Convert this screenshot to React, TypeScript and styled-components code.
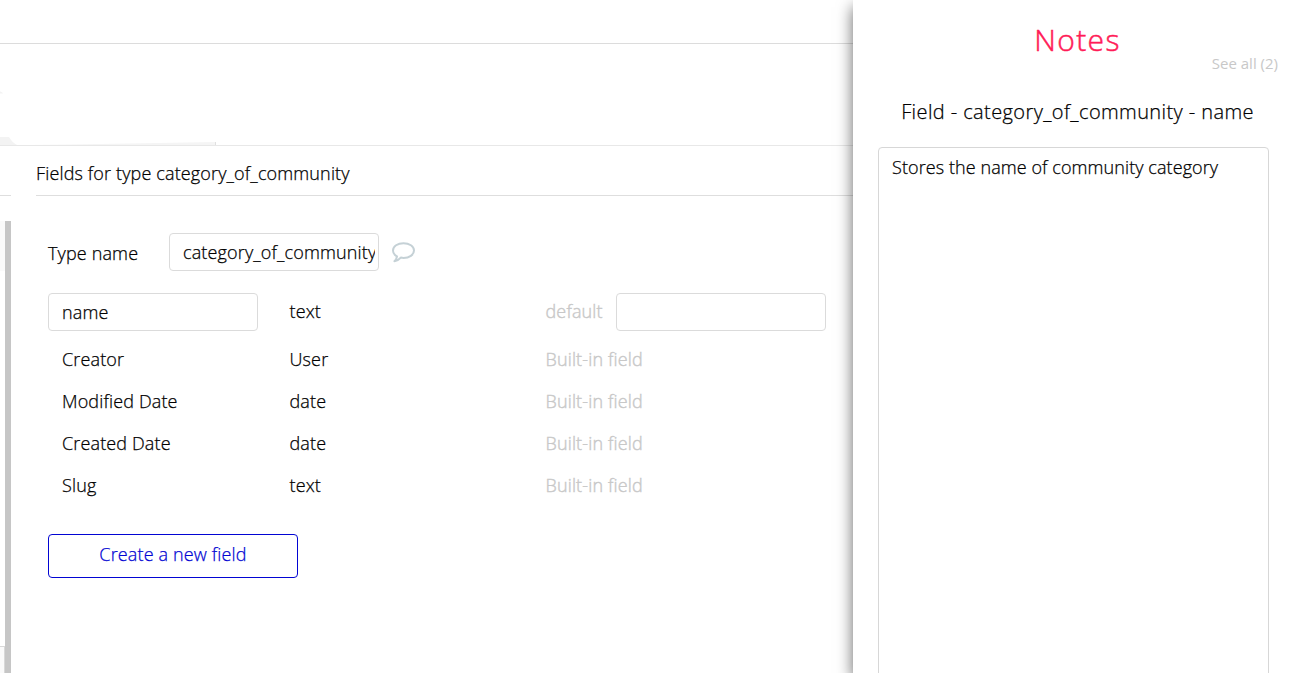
import styled, { createGlobalStyle } from "styled-components";

const GlobalStyle = createGlobalStyle`
  * {
    box-sizing: border-box;
  }

  body {
    margin: 0;
    overflow: hidden;
    background: #fff;
    color: #000;
    font-family: "Open Sans", "Noto Sans", sans-serif;
    font-size: 18px;
    font-weight: 300;
    letter-spacing: 0.14px;
    -webkit-text-stroke: 0.25px currentColor;
  }
`;

const Page = styled.div`
  display: flex;
  width: 1302px;
  height: 673px;
  overflow: hidden;
`;

const Editor = styled.main`
  display: flex;
  flex-direction: column;
  width: 853px;
`;

const TopBar = styled.div`
  height: 44px;
  border-bottom: 1px solid #dcdcdc;
`;

const TabBar = styled.div`
  display: flex;
  align-items: flex-end;
  height: 102px;
  border-bottom: 1px solid #e8e8e8;

  svg {
    display: block;
  }
`;

const Body = styled.div`
  display: flex;
  flex: 1;
  min-height: 0;
`;

const Sidebar = styled.div`
  display: flex;
  flex-direction: column;
  width: 11px;
`;

const SidebarHeader = styled.div`
  height: 50px;
  border-bottom: 1px solid #dedede;
`;

const SidebarList = styled.div`
  display: flex;
  flex: 1;
  flex-direction: column;
  justify-content: space-between;
  margin-top: 25px;
  border-right: 6px solid #c6c6c6;
`;

const SelectedType = styled.div`
  height: 50px;
  background: #fafafa;
`;

const TypeInput = styled.div`
  width: 5px;
  height: 27px;
  border-top: 1px solid #d8d8d8;
  border-right: 1px solid #d8d8d8;
  background: #fafafa;
`;

const Content = styled.section`
  flex: 1;
  margin-left: 25px;
`;

const ContentTitle = styled.div`
  height: 50px;
  padding-top: 2px;
  border-bottom: 1px solid #dedede;
  line-height: 50px;
`;

const Fields = styled.div`
  padding: 37px 0 0 12px;
`;

const TypeRow = styled.div`
  display: flex;
  align-items: center;
  height: 38px;
  margin-bottom: 22px;

  svg {
    margin-left: 12px;
  }
`;

const TypeLabel = styled.label`
  width: 121px;
  padding-top: 2px;
`;

const Input = styled.input`
  width: 210px;
  height: 38px;
  padding: 0 3px 0 13px;
  border: 1px solid #dbdbdb;
  border-radius: 4px;
  outline: none;
  background: #fff;
  color: #000;
  font: inherit;
  letter-spacing: inherit;
`;

const FieldRow = styled.div<{ $editable?: boolean }>`
  display: grid;
  grid-template-columns: 241.5px 256px 70.5px 210px;
  align-items: center;
  height: ${({ $editable }) => ($editable ? "38px" : "42px")};
  margin-bottom: ${({ $editable }) => ($editable ? "8px" : "0")};

  span {
    padding-bottom: 2px;
  }
`;

const FieldName = styled.span`
  padding-left: 14px;
`;

const Muted = styled.span`
  color: #c8c8c8;
  white-space: nowrap;
  -webkit-text-stroke: 0.4px #c8c8c8;
`;

const CreateButton = styled.button`
  width: 250px;
  height: 44px;
  margin-top: 27px;
  padding: 0 0 4px;
  border: 1px solid #0205d3;
  border-radius: 4px;
  background: #fff;
  color: #0205d3;
  font: inherit;
  letter-spacing: inherit;
  -webkit-text-stroke: 0.25px #0205d3;
`;

const NotesPanel = styled.aside`
  position: relative;
  display: flex;
  flex: 1;
  flex-direction: column;
  background: #fff;
  box-shadow: 0 7px 15px rgba(0, 0, 0, 0.6);
`;

const NotesTitle = styled.h1`
  margin: 18px 0 0;
  color: #ff1b57;
  font-size: 30px;
  font-weight: 300;
  line-height: 44px;
  letter-spacing: 1.4px;
  text-align: center;
  -webkit-text-stroke: 0.5px #ff1b57;
`;

const SeeAll = styled.a`
  margin: -9px 24px 0 0;
  color: #c8c8c8;
  font-size: 15px;
  font-weight: 400;
  line-height: 20px;
  letter-spacing: 0;
  text-align: right;
  -webkit-text-stroke: 0;
`;

const NoteSubject = styled.div`
  margin: 24px 0 20px;
  font-size: 20px;
  line-height: 30px;
  letter-spacing: 0.4px;
  text-align: center;
`;

const NoteText = styled.textarea`
  flex: 1;
  margin: 0 33px -10px 25px;
  padding: 7px 13px;
  border: 1px solid #d7d7d7;
  border-radius: 4px;
  outline: none;
  resize: none;
  background: #fff;
  color: #000;
  font: inherit;
  letter-spacing: 0.08px;
`;

const builtInFields = [
  { name: "Creator", type: "User" },
  { name: "Modified Date", type: "date" },
  { name: "Created Date", type: "date" },
  { name: "Slug", type: "text" },
];

const TabEdge = () => (
  <svg width="216" height="54" viewBox="0 0 216 54">
    <path d="M0 0.5C1.5 0.5 2.5 1.5 3 2.5H0Z" fill="#f3f3f3" />
    <path d="M0 46H9C11 49 13 52 17 54H0Z" fill="#f3f3f3" />
    <path d="M28 54L70 53.5L215 51V54Z" fill="#f5f5f5" />
    <path d="M215.5 51V54" stroke="#e0e0e0" />
  </svg>
);

const CommentIcon = () => (
  <svg width="25" height="22" viewBox="0 0 25 22" fill="none">
    <path
      d="M12.5 2.2C6.6 2.2 2 5.3 2 9.6C2 12 3.5 14.2 6 15.5C5.7 17.3 4.8 19 3.4 20.2C6 19.8 8.2 18.5 9.8 16.6C10.7 16.8 11.5 16.9 12.5 16.9C18.3 16.9 23 13.8 23 9.6C23 5.3 18.3 2.2 12.5 2.2Z"
      stroke="#c5d1d6"
      strokeWidth="2"
      strokeLinejoin="round"
    />
  </svg>
);

const NotesSidebar = () => (
  <NotesPanel>
    <NotesTitle>Notes</NotesTitle>
    <SeeAll>See all (2)</SeeAll>
    <NoteSubject>Field - category_of_community - name</NoteSubject>
    <NoteText defaultValue="Stores the name of community category" />
  </NotesPanel>
);

const App = () => {
  return (
    <>
      <GlobalStyle />
      <Page>
        <Editor>
          <TopBar />
          <TabBar>
            <TabEdge />
          </TabBar>
          <Body>
            <Sidebar>
              <SidebarHeader />
              <SidebarList>
                <SelectedType />
                <TypeInput />
              </SidebarList>
            </Sidebar>
            <Content>
              <ContentTitle>Fields for type category_of_community</ContentTitle>
              <Fields>
                <TypeRow>
                  <TypeLabel htmlFor="type-name">Type name</TypeLabel>
                  <Input id="type-name" defaultValue="category_of_community" />
                  <CommentIcon />
                </TypeRow>

                <FieldRow $editable>
                  <Input defaultValue="name" />
                  <span>text</span>
                  <Muted>default</Muted>
                  <Input />
                </FieldRow>
                {builtInFields.map(({ name, type }) => (
                  <FieldRow key={name}>
                    <FieldName>{name}</FieldName>
                    <span>{type}</span>
                    <Muted>Built-in field</Muted>
                  </FieldRow>
                ))}

                <CreateButton>Create a new field</CreateButton>
              </Fields>
            </Content>
          </Body>
        </Editor>
        <NotesSidebar />
      </Page>
    </>
  );
};

export default App;
